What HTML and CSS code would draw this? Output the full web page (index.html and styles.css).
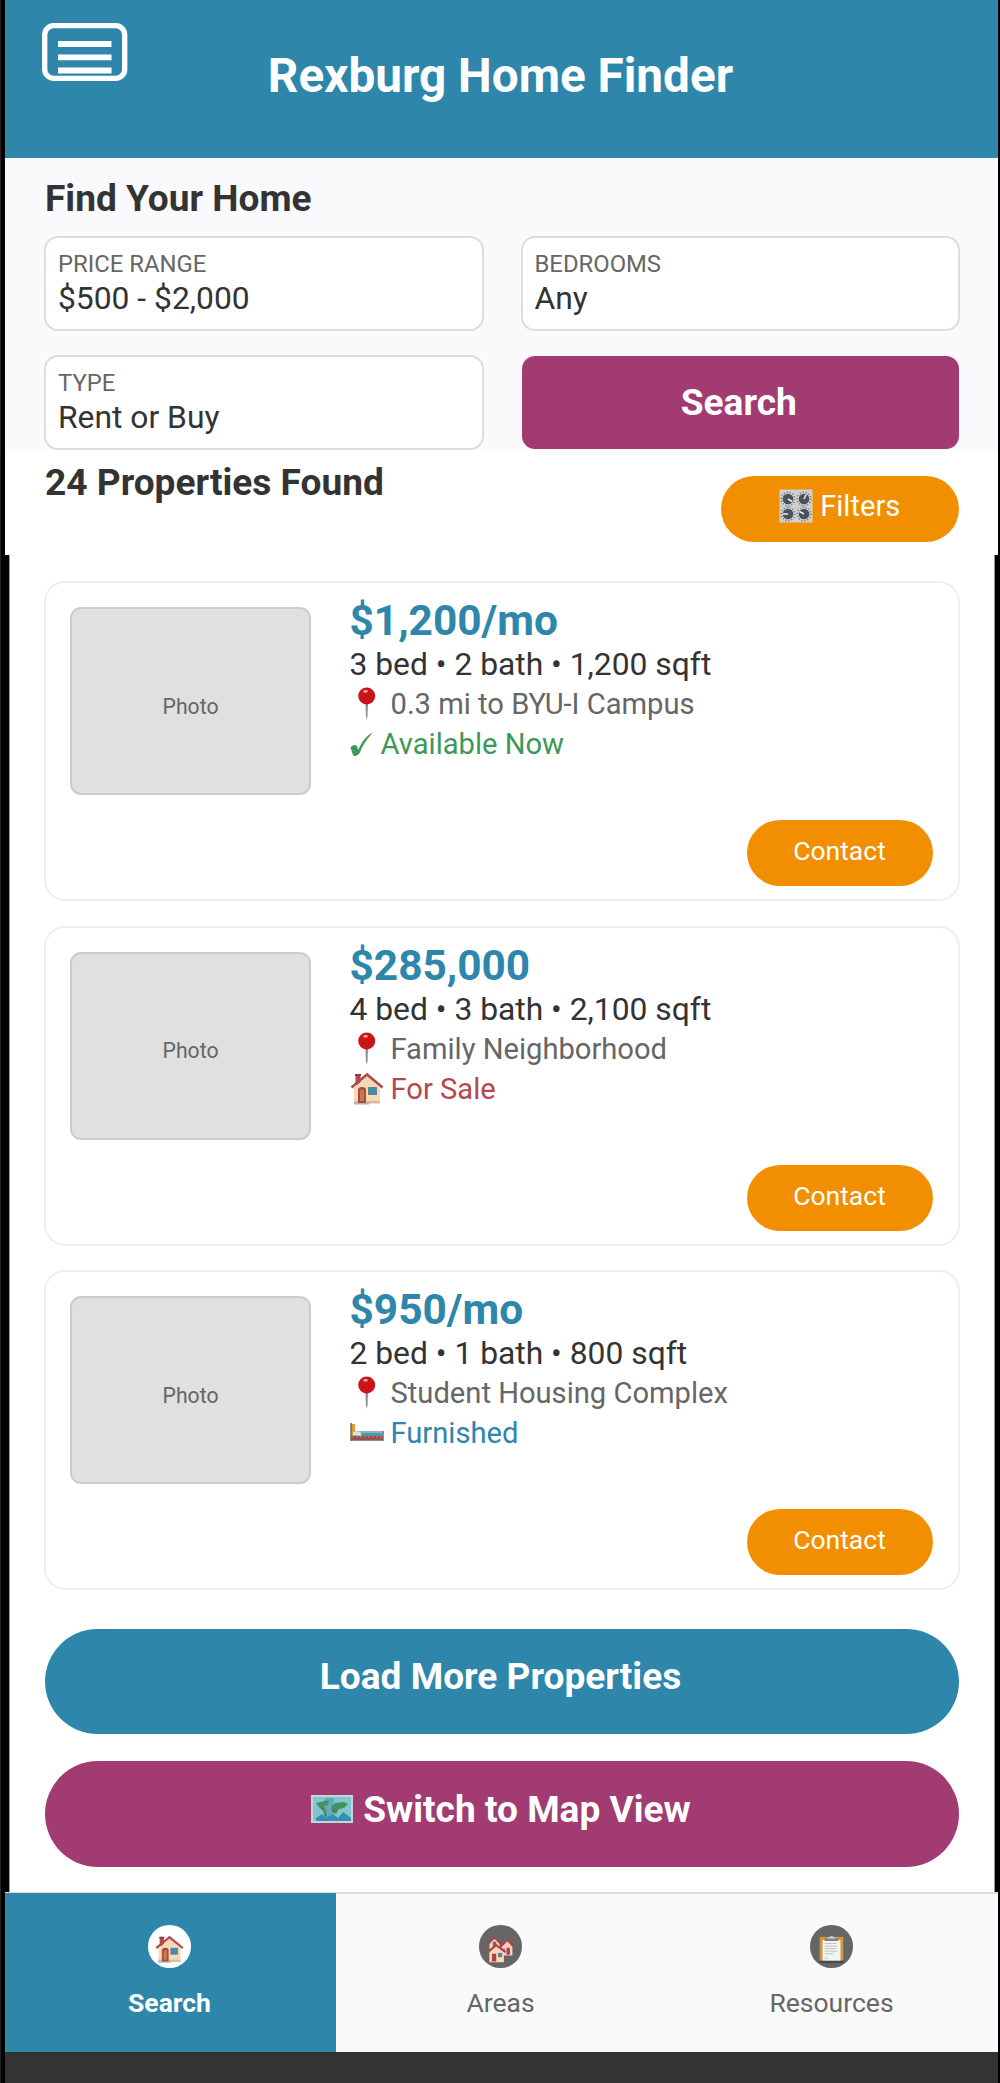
FILE: index.html
```html
<!DOCTYPE html>
<html lang="en">
<head>
<meta charset="utf-8">
<title>Rexburg Home Finder</title>
<link rel="stylesheet" href="styles.css">
</head>
<body>
<svg class="defs" aria-hidden="true">
  <symbol id="pin" viewBox="0 0 34 34">
    <path d="M15.400 16h2.600l-.5 13-.8 4-.8-4z" fill="#8b9094"/>
    <circle cx="16.700" cy="9" r="8.500" fill="#c91517"/>
    <ellipse cx="15.500" cy="4.200" rx="2.400" ry="1.500" fill="#e59a9e"/>
  </symbol>
  <symbol id="house" viewBox="0 0 34 34">
    <path d="M5.500 3h5v10h-5z" fill="#b04a4c"/>
    <path d="M5 2h6v2H5z" fill="#8c3940"/>
    <path d="M4 16 17 4l13 12v15H4z" fill="#fbd8b4"/>
    <path d="M4 29h26v2.500H4z" fill="#d9b9a5"/>
    <path d="M4 31h15v1.500H4z" fill="#a8b5b8"/>
    <path d="M8 31V18q0-3 4-3t4 3v13z" fill="#a74b45"/>
    <path d="M10 29V18.500q2-2 4 0V29z" fill="#c77b4a"/>
    <path d="M18 15h9v8h-9z" fill="#5d8296"/>
    <path d="M19.500 16.500h6v4.500h-6z" fill="#3397b2"/>
    <path d="m1.500 15.500 15.500-13 15.500 13" fill="none" stroke="#b3484c" stroke-width="2.600"/>
  </symbol>
  <symbol id="houses" viewBox="0 0 34 34">
    <path d="M4 9 10 3l6 6v7H4z" fill="#f8cfb0"/>
    <path d="M8 8h4v6H8z" fill="#4d7183"/>
    <path d="m3 10 7-7 7 7" fill="none" stroke="#b83e50" stroke-width="2"/>
    <path d="M18 14 25 7l6 7v10H18z" fill="#fbd0b3"/>
    <path d="M24 15h4v8h-4z" fill="#a94050"/>
    <path d="M18 16h4v4h-4z" fill="#468ba1"/>
    <path d="m17 14 8-8 8 8" fill="none" stroke="#bf3c50" stroke-width="2"/>
    <path d="m4 20 8-7 9 7v12H4z" fill="#fbd8b4"/>
    <path d="M7 22h5v9H7z" fill="#a94444"/>
    <path d="M14 21h5v5h-5z" fill="#468ba1"/>
    <path d="m2 20 10-8 11 8" fill="none" stroke="#b83e50" stroke-width="2.500"/>
  </symbol>
  <symbol id="bed" viewBox="0 0 34 34">
    <path d="M1 8h4v12H1z" fill="#d99a3e"/>
    <path d="M5 15h27v6H5z" fill="#4b9aae"/>
    <path d="M8 15h24v2H8z" fill="#8cb5bf"/>
    <path d="M3 19v-3q6-2 8 1v3z" fill="#d6e4e7"/>
    <path d="M1 20h32v4H1z" fill="#a14a4a"/>
    <path d="M2 21h30" stroke="#d77d68" stroke-dasharray="2 2"/>
    <path d="M1 7v18M33 15v10M1 24h32" fill="none" stroke="#746560" stroke-width="1.500"/>
  </symbol>
  <symbol id="check" viewBox="0 0 24 34">
    <path d="M.5 20.500c2-3 5.500-3.500 6.800-.5l1 3C11.500 15 16 9 23 5.500c-5.500 6-9.500 11-13 20C8 29 4 30 3 28z" fill="#3d9958"/>
  </symbol>
  <symbol id="knobs" viewBox="0 0 34 34">
    <path d="M.5.500h33v33H.5z" fill="#cfcfcf"/>
    <g fill="none" stroke="#696d70" stroke-width="1.500" stroke-dasharray="1 2">
      <circle cx="9" cy="10" r="6.700"/><circle cx="25" cy="10" r="6.700"/>
      <circle cx="9" cy="25" r="6.700"/><circle cx="25" cy="25" r="6.700"/>
    </g>
    <g fill="#47525a">
      <circle cx="9" cy="10" r="5.300"/><circle cx="25" cy="10" r="5.300"/>
      <circle cx="9" cy="25" r="5.300"/><circle cx="25" cy="25" r="5.300"/>
    </g>
    <path d="m9 10 4 2.500M25 10l2-4.500M9 25H4M25 25l-4.500-2.500" stroke="#eee" stroke-width="1.500"/>
  </symbol>
  <symbol id="map" viewBox="0 0 42 28">
    <path d="M0 0h42v28H0z" fill="#c2d8d8"/>
    <path d="M2 2h38v24H2z" fill="#82c5d0"/>
    <path d="M14 3h9v22h-9z" fill="#5eacc0"/>
    <path d="m5 23 6-4 4 4 7-4 5 4 5-6 8 6v3H5z" fill="#348fb3"/>
    <path d="M5 8q6-1 8-2l5-1-1 5-5 2 3 3 1 5-2 2-2-6-5-5zM20 12l4-4 9-1 4 2-4 4-5 1-3 5-4-3z" fill="#43935f"/>
    <path d="M10 13h4M21 16h3M14 19l1 3" stroke="#754c5c"/>
  </symbol>
  <symbol id="clipboard" viewBox="0 0 34 34">
    <path d="M3 2h28v31H3z" fill="#454b50"/>
    <path d="M3 2h28v28H3z" fill="#cf963f"/>
    <path d="M6.500 6h21v24h-21z" fill="#f4f4f2"/>
    <path d="M9 10h14M9 13h15M9 16h14M9 19h15M9 22h10M9 27h4" stroke="#b9b9b9"/>
    <path d="M9 7V4h4q4-6 8 0h4v3z" fill="#818486"/>
    <path d="M12 4q5-5 10 0z" fill="#d0d3d4"/>
  </symbol>
</svg>

<div class="app">
  <header class="header">
    <svg class="menu" viewBox="0 0 86 58" role="img" aria-label="Menu">
      <rect x="2.700" y="2.700" width="80" height="52.600" rx="9" fill="none" stroke="#fff" stroke-width="5.300"/>
      <path d="M16 21h53.500M16 34.300h53.500M16 47.500h53.500" stroke="#fff" stroke-width="5.800"/>
    </svg>
    <h1 class="title">Rexburg Home Finder</h1>
  </header>

  <section class="search">
    <h2 class="heading">Find Your Home</h2>
    <div class="fields">
      <div class="field"><div class="label">PRICE RANGE</div><div class="value">$500 - $2,000</div></div>
      <div class="field"><div class="label">BEDROOMS</div><div class="value">Any</div></div>
      <div class="field"><div class="label">TYPE</div><div class="value">Rent or Buy</div></div>
      <button class="submit">Search</button>
    </div>
  </section>

  <section class="results">
    <h2 class="heading">24 Properties Found</h2>
    <button class="filters"><svg class="emoji"><use href="#knobs"/></svg>Filters</button>
  </section>

  <main class="list">
    <article class="card">
      <div class="photo">Photo</div>
      <div class="info">
        <div class="price">$1,200/mo</div>
        <div class="details">3 bed • 2 bath • 1,200 sqft</div>
        <div class="line"><svg class="emoji"><use href="#pin"/></svg>0.3 mi to BYU-I Campus</div>
        <div class="line available"><svg class="emoji tick"><use href="#check"/></svg>Available Now</div>
      </div>
      <button class="contact">Contact</button>
    </article>
    <article class="card">
      <div class="photo">Photo</div>
      <div class="info">
        <div class="price">$285,000</div>
        <div class="details">4 bed • 3 bath • 2,100 sqft</div>
        <div class="line"><svg class="emoji"><use href="#pin"/></svg>Family Neighborhood</div>
        <div class="line sale"><svg class="emoji"><use href="#house"/></svg>For Sale</div>
      </div>
      <button class="contact">Contact</button>
    </article>
    <article class="card">
      <div class="photo">Photo</div>
      <div class="info">
        <div class="price">$950/mo</div>
        <div class="details">2 bed • 1 bath • 800 sqft</div>
        <div class="line"><svg class="emoji"><use href="#pin"/></svg>Student Housing Complex</div>
        <div class="line furnished"><svg class="emoji"><use href="#bed"/></svg>Furnished</div>
      </div>
      <button class="contact">Contact</button>
    </article>
    <div class="actions">
      <button class="wide more">Load More Properties</button>
      <button class="wide map"><svg class="map-icon"><use href="#map"/></svg>Switch to Map View</button>
    </div>
  </main>

  <nav class="nav">
    <a class="tab active"><span class="disc"><svg><use href="#house"/></svg></span>Search</a>
    <a class="tab"><span class="disc"><svg><use href="#houses"/></svg></span>Areas</a>
    <a class="tab"><span class="disc"><svg><use href="#clipboard"/></svg></span>Resources</a>
  </nav>
  <footer class="footer"></footer>
</div>
</body>
</html>
```
FILE: styles.css
```css
* { box-sizing: border-box; }
body { margin: 0; background: #000; color: #333; font-family: Roboto, "Liberation Sans", sans-serif; }
h1, h2 { margin: 0; }
button { border: 0; padding: 0; font: inherit; color: #fff; display: flex; justify-content: center; align-items: center; white-space: nowrap; }
.defs { display: none; }
.app { height: 2083px; border-left: 1px solid #242424; padding: 0 2px 0 4px; display: flex; flex-direction: column; overflow: hidden; }

.header { height: 158px; flex: none; background: #2e86ab; display: grid; }
.menu { grid-area: 1 / 1; width: 86px; height: 58px; margin: 23px 0 0 37px; }
.title { grid-area: 1 / 1; margin-top: 48px; text-align: center; font-size: 47.7px; line-height: 56px; color: #fff; padding-right: 2px; }

.search { height: 291.500px; flex: none; background: #fafafc; padding: 19px 38px 0 40px; overflow: hidden; }
.heading { font-size: 37.1px; line-height: 44px; white-space: nowrap; }
.fields { display: grid; grid-template-columns: 1fr 1fr; grid-auto-rows: 95px; gap: 24px 37px; margin: 15px 0 0 -1px; }
.field { border: 2.500px solid #ddd; border-radius: 14px; background: #fff; padding: 12px 12px 0; }
.label { font-size: 23.85px; line-height: 28px; color: #666; }
.value { font-size: 31.8px; line-height: 36px; margin-top: 2px; }
.submit { height: 93px; margin: 1px 1px 0; border-radius: 13px; background: #a23b72; font-size: 37.1px; font-weight: 700; padding: 0 3px 1px 0; }

.results { height: 105.500px; flex: none; background: #fff; padding: 11px 39px 0 40px; display: flex; justify-content: space-between; }
.filters { width: 238.500px; height: 66px; margin-top: 15px; border-radius: 33px; background: #f18f01; font-size: 29.15px; gap: 7px; padding-bottom: 6px; }
.emoji { width: 34px; height: 34px; flex: none; }

.list { flex: 1; background: #fff; margin: 0 3px 0 4px; border: solid #999; border-width: 0 1px; padding: 26px 34.500px 0 33.500px; }
.card { height: 320px; margin-bottom: 24.500px; border: 2px solid #eee; border-radius: 21px; padding: 13px 25px 13px 24px; display: grid; grid-template-columns: 241px 1fr; grid-template-rows: 1fr 66px; column-gap: 39px; }
.photo { width: 241px; height: 188px; margin-top: 11px; border: 2.650px solid #ccc; border-radius: 11px; background: #e0e0e0; color: #666; font-size: 21.2px; display: flex; align-items: center; justify-content: center; padding: 10px 0 0 1px; }
.price { font-size: 42.4px; line-height: 50px; height: 48px; font-weight: 700; color: #2e86ab; }
.details { font-size: 31.8px; line-height: 40px; height: 40px; white-space: nowrap; }
.line { font-size: 29.15px; line-height: 40px; height: 40px; color: #666; display: flex; align-items: center; gap: 7px; white-space: nowrap; }
.available { color: #3d9958; }
.tick { width: 24px; }
.sale { color: #b84650; }
.furnished { color: #2e86ab; }
.contact { grid-column: 1 / -1; justify-self: end; width: 186px; height: 66px; border-radius: 33px; background: #f18f01; font-size: 26.5px; padding-bottom: 5px; }
.actions { padding: 14px 1px 0; display: grid; gap: 27px; }
.wide { height: 105.500px; border-radius: 53px; font-size: 37.1px; font-weight: 700; padding-bottom: 10px; }
.more { background: #2e86ab; padding-right: 2px; }
.map { background: #a23b72; gap: 10px; padding: 0 1px 9px 0; }
.map-icon { width: 42px; height: 28px; }

.nav { height: 160px; flex: none; background: #fafafc; display: grid; grid-template-columns: repeat(3, 1fr); border-top: 2px solid #ddd; }
.tab { display: flex; flex-direction: column; align-items: center; padding: 31px 2px 0 0; gap: 19px; font-size: 26.5px; line-height: 32px; color: #666; }
.active { background: #2e86ab; color: #fff; font-weight: 700; margin-top: -1px; padding-top: 32px; }
.disc { width: 42.500px; height: 42.500px; border-radius: 50%; background: #666; display: flex; justify-content: center; align-items: center; padding-top: 7px; }
.disc svg { width: 29px; height: 29px; }
.active .disc { background: #fff; }
.footer { height: 31px; flex: none; background: #333; }
```
